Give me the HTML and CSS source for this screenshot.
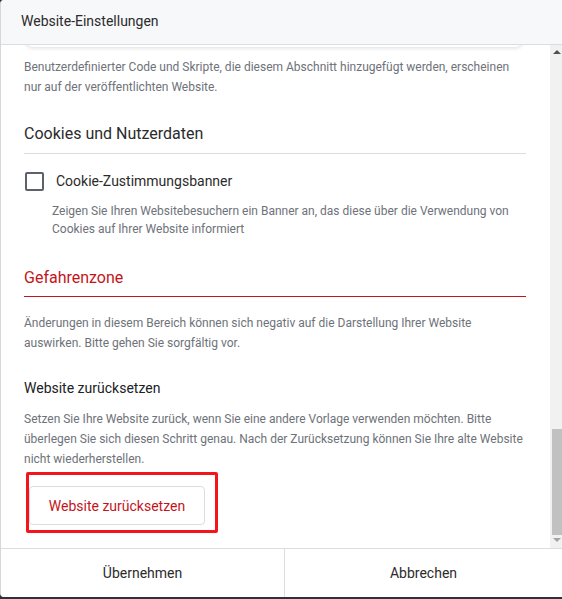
FILE: index.html
```html
<!DOCTYPE html>
<html lang="de">
<head>
    <meta charset="UTF-8">
    <meta name="viewport" content="width=device-width, initial-scale=1.0">
    <title>Website-Einstellungen</title>
    <link rel="stylesheet" href="styles.css">
</head>
<body>
    <div class="dialog">
        <div class="dialog-header">Website-Einstellungen</div>

        <div class="dialog-body">
            <div class="content">
                <div class="card-end"></div>
                <p class="hint first">Benutzerdefinierter Code und Skripte, die diesem Abschnitt hinzugefügt werden, erscheinen nur auf der veröffentlichten Website.</p>

                <h2 class="section-title">Cookies und Nutzerdaten</h2>

                <label class="check-row" for="inpCookie">
                    <input type="checkbox" id="inpCookie">
                    <span class="checkbox"></span>
                    <span class="check-label">Cookie-Zustimmungsbanner</span>
                </label>
                <p class="hint check-hint">Zeigen Sie Ihren Websitebesuchern ein Banner an, das diese über die Verwendung von Cookies auf Ihrer Website informiert</p>

                <h2 class="section-title danger">Gefahrenzone</h2>
                <p class="hint danger-hint">Änderungen in diesem Bereich können sich negativ auf die Darstellung Ihrer Website auswirken. Bitte gehen Sie sorgfältig vor.</p>

                <h3 class="sub-title">Website zurücksetzen</h3>
                <p class="hint reset-hint">Setzen Sie Ihre Website zurück, wenn Sie eine andere Vorlage verwenden möchten. Bitte überlegen Sie sich diesen Schritt genau. Nach der Zurücksetzung können Sie Ihre alte Website nicht wiederherstellen.</p>

                <div class="highlight">
                    <button class="btn-reset">Website zurücksetzen</button>
                </div>
            </div>

            <div class="scrollbar">
                <span class="arrow up"></span>
                <span class="track">
                    <span class="thumb"></span>
                </span>
                <span class="arrow down"></span>
            </div>
        </div>

        <div class="dialog-footer">
            <button class="footer-btn">Übernehmen</button>
            <button class="footer-btn">Abbrechen</button>
        </div>
    </div>
</body>
</html>
```

FILE: styles.css
```css
html, body {
    margin: 0;
    height: 100%;
    background: #2e3035;
    font-family: Roboto, "Liberation Sans", Arial, sans-serif;
}

.dialog {
    display: flex;
    flex-direction: column;
    height: 597px;
    background: #fff;
    border-left: 1px solid #d6d7da;
    border-radius: 4px 0 0 4px;
    overflow: hidden;
}

.dialog-header {
    height: 44px;
    line-height: 43px;
    padding-left: 20px;
    background: #f7f8fa;
    border-bottom: 1px solid #dcdde0;
    font-size: 14px;
    color: #2b2b2b;
    flex-shrink: 0;
}

.dialog-body {
    flex: 1;
    display: flex;
    overflow: hidden;
    min-height: 0;
}

.content {
    flex: 1;
    padding: 0 24px 0 23px;
}

/* bottom of the card above, scrolled out of view */
.card-end {
    height: 20px;
    margin: -18px 3px 0 1px;
    background: #fff;
    border-radius: 0 0 8px 8px;
    box-shadow: 0 1px 4px rgba(0, 0, 0, 0.14);
}

.hint {
    margin: 0;
    font-size: 12px;
    line-height: 20px;
    color: #6e7279;
}

.hint.first {
    margin-top: 10px;
}

.section-title {
    margin: 25px 0 0;
    padding-bottom: 7px;
    font-size: 16px;
    font-weight: 400;
    line-height: 24px;
    color: #2b2b2b;
    border-bottom: 1px solid #dcdde0;
}

.section-title.danger {
    margin-top: 28px;
    padding-bottom: 6px;
    color: #c4141b;
    border-bottom: 1px solid #c4141b;
}

.check-row {
    display: flex;
    align-items: center;
    margin-top: 17px;
    height: 20px;
    cursor: pointer;
}

.check-row input {
    position: absolute;
    opacity: 0;
}

.checkbox {
    width: 15px;
    height: 15px;
    border: 2px solid #5d626a;
    border-radius: 2px;
    margin-left: 1px;
}

.check-label {
    margin-left: 12px;
    font-size: 14px;
    color: #2b2b2b;
}

.hint.check-hint {
    margin: 11px 0 0 28px;
    line-height: 18px;
}

.hint.danger-hint {
    margin-top: 16px;
}

.sub-title {
    margin: 25px 0 0;
    font-size: 14px;
    font-weight: 400;
    line-height: 20px;
    color: #202124;
}

.hint.reset-hint {
    margin-top: 11px;
}

/* red annotation frame round the button */
.highlight {
    display: inline-block;
    margin: 3px 0 0 2px;
    padding: 11px 10px 5px 0;
    border: 3px solid #f4141c;
    border-radius: 2px;
}

.btn-reset {
    display: block;
    width: 176px;
    height: 39px;
    background: #fff;
    border: 1px solid #dcdde0;
    border-radius: 4px;
    font-family: inherit;
    font-size: 14px;
    color: #c4141b;
    cursor: pointer;
}

.scrollbar {
    width: 12px;
    flex-shrink: 0;
    display: flex;
    flex-direction: column;
    align-items: center;
    background: #f1f1f1;
}

.arrow {
    width: 0;
    height: 0;
    border-left: 4px solid transparent;
    border-right: 4px solid transparent;
}

.arrow.up {
    margin: 5px 0 4px 2px;
    border-bottom: 4px solid #505050;
}

.arrow.down {
    margin: 3px 0 6px 2px;
    border-top: 4px solid #a3a3a3;
}

.track {
    flex: 1;
    width: 100%;
    display: flex;
    flex-direction: column;
    justify-content: flex-end;
    align-items: flex-end;
}

.thumb {
    width: 10px;
    height: 106px;
    background: #c1c1c1;
}

.dialog-footer {
    display: flex;
    height: 48px;
    border-top: 1px solid #dcdde0;
    flex-shrink: 0;
}

.footer-btn {
    flex: 1;
    background: #fff;
    border: none;
    font-family: inherit;
    font-size: 14px;
    color: #2b2b2b;
    cursor: pointer;
}

.footer-btn:first-child {
    flex: 0 0 283px;
}

.footer-btn + .footer-btn {
    border-left: 1px solid #dcdde0;
}
```
